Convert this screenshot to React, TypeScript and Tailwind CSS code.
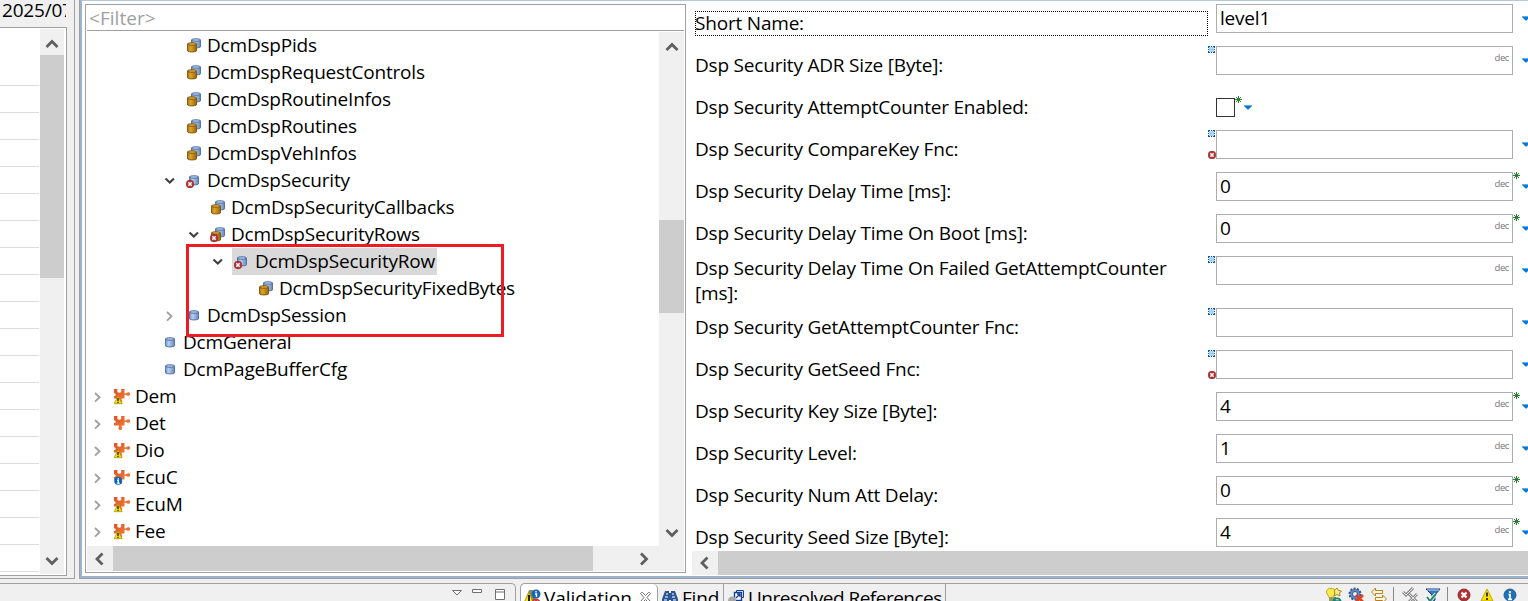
import type { ReactNode } from 'react';

type Kind = 'pair' | 'pairError' | 'single' | 'singleError' | 'warn' | 'plain' | 'info';
type TreeRow = { label: string; level: number; kind: Kind; state?: 'open' | 'closed'; selected?: boolean };

const tree: TreeRow[] = [
  { label: 'DcmDspPids', level: 4, kind: 'pair' },
  { label: 'DcmDspRequestControls', level: 4, kind: 'pair' },
  { label: 'DcmDspRoutineInfos', level: 4, kind: 'pair' },
  { label: 'DcmDspRoutines', level: 4, kind: 'pair' },
  { label: 'DcmDspVehInfos', level: 4, kind: 'pair' },
  { label: 'DcmDspSecurity', level: 4, kind: 'singleError', state: 'open' },
  { label: 'DcmDspSecurityCallbacks', level: 5, kind: 'pair' },
  { label: 'DcmDspSecurityRows', level: 5, kind: 'pairError', state: 'open' },
  { label: 'DcmDspSecurityRow', level: 6, kind: 'singleError', state: 'open', selected: true },
  { label: 'DcmDspSecurityFixedBytes', level: 7, kind: 'pair' },
  { label: 'DcmDspSession', level: 4, kind: 'single', state: 'closed' },
  { label: 'DcmGeneral', level: 3, kind: 'single' },
  { label: 'DcmPageBufferCfg', level: 3, kind: 'single' },
  { label: 'Dem', level: 1, kind: 'warn', state: 'closed' },
  { label: 'Det', level: 1, kind: 'plain', state: 'closed' },
  { label: 'Dio', level: 1, kind: 'warn', state: 'closed' },
  { label: 'EcuC', level: 1, kind: 'info', state: 'closed' },
  { label: 'EcuM', level: 1, kind: 'warn', state: 'closed' },
  { label: 'Fee', level: 1, kind: 'warn', state: 'closed' },
];

const indent: Record<number, string> = { 1: 'w-0', 3: 'w-12', 4: 'w-[72px]', 5: 'w-24', 6: 'w-[120px]', 7: 'w-36' };

type Field = { label: string; value?: string; dec?: boolean; optional?: boolean; error?: boolean; star?: boolean; check?: boolean; tall?: boolean; focus?: boolean };

const fields: Field[] = [
  { label: 'Short Name:', value: 'level1', focus: true },
  { label: 'Dsp Security ADR Size [Byte]:', dec: true, optional: true },
  { label: 'Dsp Security AttemptCounter Enabled:', check: true },
  { label: 'Dsp Security CompareKey Fnc:', optional: true, error: true },
  { label: 'Dsp Security Delay Time [ms]:', value: '0', dec: true, star: true },
  { label: 'Dsp Security Delay Time On Boot [ms]:', value: '0', dec: true, star: true },
  { label: 'Dsp Security Delay Time On Failed GetAttemptCounter [ms]:', dec: true, optional: true, tall: true },
  { label: 'Dsp Security GetAttemptCounter Fnc:', optional: true },
  { label: 'Dsp Security GetSeed Fnc:', optional: true, error: true },
  { label: 'Dsp Security Key Size [Byte]:', value: '4', dec: true, star: true },
  { label: 'Dsp Security Level:', value: '1', dec: true },
  { label: 'Dsp Security Num Att Delay:', value: '0', dec: true, star: true },
  { label: 'Dsp Security Seed Size [Byte]:', value: '4', dec: true, star: true },
];

function Defs() {
  return (
    <svg width="0" height="0" className="absolute">
      <defs>
        <linearGradient id="blue" x1="0" x2="1">
          <stop offset="0" stopColor="#6d93cc" />
          <stop offset=".35" stopColor="#b9d0ee" />
          <stop offset="1" stopColor="#6488c0" />
        </linearGradient>
        <linearGradient id="gold" x1="0" x2="1">
          <stop offset="0" stopColor="#b07a0c" />
          <stop offset=".35" stopColor="#dca32a" />
          <stop offset="1" stopColor="#9a6600" />
        </linearGradient>
        <linearGradient id="orange" x1="0" x2="1" y2="1">
          <stop offset="0" stopColor="#e2512a" />
          <stop offset="1" stopColor="#f28a35" />
        </linearGradient>
        <radialGradient id="red">
          <stop offset="0" stopColor="#d8403c" />
          <stop offset="1" stopColor="#a82a2c" />
        </radialGradient>
      </defs>
    </svg>
  );
}

function Cylinder({ x, y, tone }: { x: number; y: number; tone: 'blue' | 'gold' }) {
  const line = tone === 'blue' ? '#4f6b9d' : '#7a5210';
  const top = tone === 'blue' ? '#a9c6ea' : '#d9a840';
  return (
    <g transform={`translate(${x} ${y})`}>
      <path d="M.5 2v6.900C1.600 10.300 8.400 10.300 9.500 8.900V2z" fill={`url(#${tone})`} stroke={line} strokeWidth=".9" />
      <path d="M.5 2C.5 .3 9.500 .3 9.500 2S.5 3.700 .5 2z" fill={top} stroke={line} strokeWidth=".9" />
    </g>
  );
}

function ErrorMark({ x, y }: { x: number; y: number }) {
  return (
    <g transform={`translate(${x} ${y})`}>
      <circle cx="4" cy="4" r="3.900" fill="url(#red)" stroke="#8f3437" strokeWidth=".5" />
      <path d="M2.300 2.300l3.400 3.400M5.700 2.300L2.300 5.700" stroke="#fff" strokeWidth="1.400" />
    </g>
  );
}

function NodeIcon({ kind }: { kind: Kind }) {
  if (kind === 'warn' || kind === 'plain' || kind === 'info') {
    return (
      <svg width="18" height="17" viewBox="1 0.5 18 17" className="shrink-0">
        <path
          d="M1 1.500h3.200c.8 0-.3 1.800.3 2.900.6 1 3 1 3.600 0 .6-1.100-.5-2.900.3-2.900H11.500v4.300c.9.400 1.700.1 2.300-.5 1.300-1.200 3.400-.5 3.400 1.200s-2.100 2.400-3.400 1.300c-.6-.6-1.500-.8-2.300-.3v3.400H9c-1 .3-.5.900-.1 1.500.8 1.300.1 3.200-1.600 3.200s-2.400-1.900-1.600-3.200c.4-.6.7-1.200-.2-1.500H1V8.500c2.200.6 2.200-3.400 0-2.800z"
          fill="url(#orange)"
        />
        {kind === 'warn' && (
          <g>
            <path d="M5 8.300L1.200 16.200h8z" fill="#ffe100" stroke="#a89400" strokeWidth=".8" />
            <path d="M5 10.500v3M5 14.200v1.300" stroke="#222" strokeWidth="1.400" />
          </g>
        )}
        {kind === 'info' && (
          <g>
            <circle cx="5.200" cy="12.300" r="4" fill="#0a63c0" />
            <path d="M5.300 9.600v1.400M4 11.900h1.300v2.600M3.800 14.700h3" stroke="#fff" strokeWidth="1.200" fill="none" />
          </g>
        )}
      </svg>
    );
  }
  const pair = kind === 'pair' || kind === 'pairError';
  const bad = kind === 'pairError' || kind === 'singleError';
  return (
    <svg width="18" height="17" viewBox="0 0 18 17" className="shrink-0">
      {pair && <Cylinder x={5} y={1} tone="blue" />}
      {pair && <Cylinder x={1} y={5} tone="gold" />}
      {!pair && <Cylinder x={3} y={3} tone="blue" />}
      {bad && <ErrorMark x={0} y={8} />}
    </svg>
  );
}

function Arrow({ dir }: { dir: 'up' | 'down' | 'left' | 'right' }) {
  const d = {
    up: 'M2.500 11l5.500-5.500 5.500 5.500',
    down: 'M2.500 5l5.500 5.500 5.500-5.500',
    left: 'M10.500 2.500L5 8l5.500 5.500',
    right: 'M5 2.500L10.500 8 5 13.500',
  }[dir];
  return (
    <svg width="16" height="16" viewBox="0 0 16 16" className="shrink-0">
      <path d={d} fill="none" stroke="#5f5f5f" strokeWidth="2.800" />
    </svg>
  );
}

function Twisty({ state }: { state?: 'open' | 'closed' }) {
  return (
    <span className="flex w-[25px] shrink-0 items-center pl-1">
      {state && (
        <svg width="14" height="14" viewBox="0 0 14 14">
          {state === 'open' ? (
            <path d="M2.500 4.500L6.800 8.500 11 4.500" fill="none" stroke="#404040" strokeWidth="2.100" />
          ) : (
            <path d="M4 3l4.500 4.300L4 11.600" fill="none" stroke="#a2a2a2" strokeWidth="1.900" />
          )}
        </svg>
      )}
    </span>
  );
}

function Drop() {
  return (
    <svg width="8" height="5" viewBox="0 0 8 5" className="shrink-0">
      <path d="M0 0h8v1L4.500 4.500h-1L0 1z" fill="#0878d4" />
      <path d="M0 0h8v1H0z" fill="#5db0ec" />
    </svg>
  );
}

function Star() {
  return (
    <svg width="7" height="7" viewBox="0 0 7 7" className="shrink-0">
      <path d="M3.500 0v7M0 3.500h7M1 1l5 5M6 1L1 6" stroke="#1c7a22" strokeWidth=".95" />
    </svg>
  );
}

function FieldRow({ f }: { f: Field }) {
  return (
    <div className={f.tall ? 'flex h-[52px] shrink-0' : 'flex h-[42px] shrink-0'}>
      <div className="w-[513px] shrink-0">
        {f.tall ? (
          <div className="w-[490px] leading-[25px]">{f.label}</div>
        ) : (
          <div className={f.focus ? 'mt-[7px] h-[25px] leading-[25px] outline-1 -outline-offset-1 outline-dotted outline-black' : 'mt-[7px] h-[25px] leading-[25px]'}>
            {f.label}
          </div>
        )}
      </div>
      <div className="flex h-[29px] w-2 shrink-0 flex-col justify-between">
        {f.optional && (
          <svg width="7" height="7" viewBox="0 0 7 7" shapeRendering="crispEdges">
            <rect x="1" y="1" width="5" height="5" fill="#a9d2fb" />
            <path d="M0 0h2v1H0zM3 0h1v1H3zM5 0h2v1H5zM0 6h2v1H0zM3 6h1v1H3zM5 6h2v1H5zM0 1h1v1H0zM0 3h1v1H0zM0 5h1v1H0zM6 1h1v1H6zM6 3h1v1H6zM6 5h1v1H6z" fill="#0b55a5" />
          </svg>
        )}
        {f.error && (
          <svg width="8" height="8" viewBox="0 0 8 8">
            <ErrorMark x={0} y={0} />
          </svg>
        )}
      </div>
      {f.check ? (
        <div className="flex pt-[10px]">
          <span className="size-[19px] border border-[#333]" />
          <span className="-mt-[2px] w-[9px]">
            <Star />
          </span>
          <span className="mt-[7px]">
            <Drop />
          </span>
        </div>
      ) : (
        <div className="flex">
          <div className="flex h-[29px] w-[297px] shrink-0 items-center justify-between border border-[#abadb3] bg-white pr-[3px] pl-[3px]">
            <span className="leading-[27px]">{f.value}</span>
            {f.dec && <span className="pb-[5px] text-[9.5px] leading-none tracking-[-0.4px] text-[#777]">dec</span>}
          </div>
          <span className="w-[9px] shrink-0 pt-0">{f.star && <Star />}</span>
          <span className="pt-3">
            <Drop />
          </span>
        </div>
      )}
    </div>
  );
}

function LogPanel() {
  return (
    <div className="flex h-[579px] w-[75px] shrink-0 flex-col border-r border-b border-[#a0a0a0] bg-[#f0f0f0]">
      <div className="h-[27px] w-[66px] shrink-0 overflow-hidden pl-[2px] text-[19px] leading-[21px] whitespace-nowrap">2025/07</div>
      <div className="flex h-[549px] w-[67px] border-t border-r border-b border-[#a0a0a0] bg-white pt-px">
        <div className="flex w-10 flex-col overflow-hidden pr-px">
          <div className="h-[57px] shrink-0 border-b border-[#dcdcdc]" />
          {Array.from({ length: 18 }, (_, i) => (
            <div key={i} className="h-[27px] shrink-0 border-b border-[#dcdcdc]" />
          ))}
        </div>
        <div className="mb-px flex w-6 flex-col items-center justify-between bg-[#f0f0f0]">
          <div className="flex h-[26px] items-center pt-[3px]"><Arrow dir="up" /></div>
          <div className="h-[223px] w-6 bg-[#cdcdcd]" />
          <div className="grow" />
          <div className="flex h-[26px] items-center"><Arrow dir="down" /></div>
        </div>
      </div>
    </div>
  );
}

function TreePanel() {
  return (
    <div className="relative mt-1 flex h-[569px] w-[601px] shrink-0 flex-col border border-[#a0a0a0] bg-white px-px">
      <div className="h-[26px] shrink-0 border-b border-[#a0a0a0] pl-[2px] text-[19px] leading-[27px] tracking-[0.05px] text-[#a0a0a0]">&lt;Filter&gt;</div>
      <div className="flex h-[515px] shrink-0 pt-px">
        <div className="w-[572px] shrink-0">
          {tree.map((n) => (
            <div key={n.label} className="flex h-[27px] items-center">
              <span className={`${indent[n.level]} shrink-0`} />
              <Twisty state={n.state} />
              <span className={n.selected ? 'flex h-[27px] items-center bg-[#d9d9d9] pr-[2px]' : 'flex h-[27px] items-center'}>
                <span className="-mr-px flex w-6 pl-[2px]"><NodeIcon kind={n.kind} /></span>
                <span className="leading-[27px] whitespace-nowrap">{n.label}</span>
              </span>
            </div>
          ))}
        </div>
        <div className="flex grow flex-col items-center bg-[#f0f0f0]">
          <div className="flex h-[26px] items-center pt-[3px]"><Arrow dir="up" /></div>
          <div className="h-[162px]" />
          <div className="h-[93px] w-full bg-[#cdcdcd]" />
          <div className="grow" />
          <div className="flex h-[26px] items-center"><Arrow dir="down" /></div>
        </div>
      </div>
      <div className="flex h-[25px] items-center bg-[#f0f0f0]">
        <div className="flex w-[26px] shrink-0 justify-center"><Arrow dir="left" /></div>
        <div className="h-full w-[480px] shrink-0 bg-[#cdcdcd]" />
        <div className="flex grow pl-[43px]"><Arrow dir="right" /></div>
      </div>
      <div className="absolute top-[239px] left-[100px] h-[93px] w-[318px] border-[3px] border-[#ed1c24]" />
    </div>
  );
}

function Tool({ children }: { children: ReactNode }) {
  return <svg width="16" height="16" viewBox="0 0 16 16" className="shrink-0">{children}</svg>;
}

function BottomBar() {
  return (
    <div className="flex h-[18px] overflow-hidden">
      <div className="flex h-10 w-[516px] shrink-0 justify-end rounded-tr-[5px] border-t border-r border-[#a0a0a0] pr-[9px]">
        <svg width="56" height="16" viewBox="0 0 56 16" fill="#fff" stroke="#707070">
          <path d="M2.500 6.500h9L7 11z" />
          <path d="M22.500 5.500h9v3h-9z" />
          <path d="M45.500 5.500h9v10h-9zM45.500 8h9" />
        </svg>
      </div>
      <div className="ml-1 flex h-10 grow rounded-tl-[5px] border-t border-l border-[#a0a0a0] text-[19px] leading-[29px] tracking-[-0.2px]">
        <div className="flex w-[137px] shrink-0 rounded-t-[5px] border-r border-[#a0a0a0] bg-white pt-0 pl-[3px]">
          <svg width="18" height="20" viewBox="0 0 18 20" className="mt-[5px] mr-[2px] shrink-0">
            <path d="M5 1h4l4 14H0z" fill="#8a8a6a" />
            <path d="M5 3L-1 16h11z" fill="#ffe21a" stroke="#b19a00" />
            <path d="M5 6v6" stroke="#222" strokeWidth="2" />
            <circle cx="12" cy="5" r="4.500" fill="#1766b5" />
            <path d="M12 2v1.500M11 5h1.500v3" stroke="#fff" strokeWidth="1.400" fill="none" />
            <circle cx="12" cy="14" r="4.500" fill="#c5383d" />
            <path d="M10 12l4 4M14 12l-4 4" stroke="#fff" strokeWidth="1.400" />
          </svg>
          <span className="w-[96px] shrink-0 tracking-[-0.05px]">Validation</span>
          <svg width="11" height="11" viewBox="0 0 11 11" className="mt-2 shrink-0" fill="#fff" stroke="#6b6b6b">
            <path d="M.5 1.500l1-1h1l3 3 3-3h1l1 1-3.500 4 3.500 4-1 1h-1l-3-3-3 3h-1l-1-1 3.500-4z" />
          </svg>
        </div>
        <div className="flex w-[66px] shrink-0 border-r border-[#a0a0a0] pl-1">
          <svg width="17" height="18" viewBox="0 0 17 18" className="mt-[6px] mr-[3px] shrink-0">
            <path d="M3 1h4v2h2V1h4l3 8v6H9v-5H7v5H0V9z" fill="#2c5592" />
            <path d="M2 10h3M11 10h3M4 4h2M10 4h2M3 7h3M10 7h3" stroke="#b5cdec" strokeWidth="1.500" />
          </svg>
          <span>Find</span>
        </div>
        <div className="flex w-[222px] shrink-0 border-r border-[#a0a0a0] pl-1">
          <svg width="17" height="18" viewBox="0 0 17 18" className="mt-[5px] mr-[3px] shrink-0">
            <path d="M8.500 1.500h7v7h-7z" fill="#eef5ff" stroke="#123f93" />
            <path d="M6.500 3.500h7v8h-7z" fill="#fff" stroke="#123f93" strokeWidth="1.400" />
            <path d="M8 9l4-4M9 5h3v3" stroke="#123f93" strokeWidth="1.300" fill="none" />
            <path d="M0 12c0-5 6-6 8-2v6H0z" fill="#a7a7a7" />
          </svg>
          <span className="tracking-[-0.5px] whitespace-nowrap">Unresolved References</span>
        </div>
        <div className="mr-[10px] flex grow items-start justify-end pt-[3px]">
          <Tool>
            <path d="M.5 5c0-5 9-5 9 0 0 2.500-2.500 3.500-2.500 5.500H3C3 8.500.5 7.500.5 5z" fill="#ffe84c" stroke="#c4a32b" />
            <path d="M11 1l1.500 2.500 3 .5-2 2 .5 3-3-1.500L8 9l1-3-1-2z" fill="#ffe97d" stroke="#a68b1e" />
            <path d="M3 10h5v5H3z" fill="#999966" />
            <path d="M7 16c0-6 7-6 8-1M9 10v4h5" fill="none" stroke="#227e70" strokeWidth="1.600" />
          </Tool>
          <span className="w-[6px]" />
          <Tool>
            <circle cx="7" cy="7" r="5.500" fill="#6889be" stroke="#365990" strokeWidth="2" strokeDasharray="2 1.400" />
            <circle cx="7" cy="7" r="2.500" fill="#eef4fc" stroke="#365990" />
            <path d="M8 8l7 7M15 8l-7 7" stroke="#df4221" strokeWidth="2.800" />
          </Tool>
          <span className="w-[7px]" />
          <Tool>
            <path d="M.5 5l4-4v2.500h7v3h-7V9zM15.500 12l-4-4v2.500h-7v3h7V16z" fill="#fff7df" stroke="#b98015" />
          </Tool>
          <span className="mr-2 ml-[6px] h-[18px] w-px bg-[#888]" />
          <Tool>
            <path d="M1 5l3 3 7-7M7 7l8 8M15 7l-8 8" fill="none" stroke="#8c8c8c" strokeWidth="3" />
            <path d="M1 5l3 3 7-7M7 7l8 8M15 7l-8 8" fill="none" stroke="#e2e2e2" />
          </Tool>
          <span className="w-[7px]" />
          <Tool>
            <path d="M1 2h14L10 8v5l-3 2V8z" fill="#3d78c0" stroke="#183f82" />
            <path d="M2 3h12" stroke="#b9dafa" />
            <path d="M2 10l3 4 6-7" fill="none" stroke="#fff" strokeWidth="3.500" />
            <path d="M2 10l3 4 6-7" fill="none" stroke="#27856c" strokeWidth="2" />
          </Tool>
          <span className="mr-2 ml-[6px] h-[18px] w-px bg-[#888]" />
          <Tool>
            <circle cx="8" cy="8" r="6" fill="url(#red)" stroke="#8c3035" />
            <path d="M5.500 5.500l5 5M10.500 5.500l-5 5" stroke="#fff" strokeWidth="2.200" />
          </Tool>
          <span className="w-[7px]" />
          <Tool>
            <path d="M8 2l6 12H2z" fill="#ffe100" stroke="#c3a500" strokeLinejoin="round" />
            <path d="M8 5.500v4M8 11v2" stroke="#222" strokeWidth="1.700" />
          </Tool>
          <span className="w-[7px]" />
          <Tool>
            <circle cx="8" cy="8" r="6" fill="#1e70bd" stroke="#285e93" />
            <path d="M8 4v2M6.500 7.700H8V12M6 12.300h4" stroke="#fff" strokeWidth="1.700" fill="none" />
          </Tool>
        </div>
      </div>
    </div>
  );
}

export default function App() {
  return (
    <div className="h-[601px] w-[1528px] overflow-hidden bg-[#f0f0f0] font-['Open_Sans','Noto_Sans',sans-serif] text-[19px] tracking-[-0.2px] text-black">
      <Defs />
      <div className="flex h-[579px]">
        <LogPanel />
        <div className="ml-1 flex h-[579px] grow border-b border-l border-[#a0a0a0]">
          <div className="flex h-[578px] w-full border-t border-b-2 border-l-2 border-t-[#b4c7dc] border-b-[#99b4d1] border-l-[#99b4d1] bg-white pl-[3px]">
            <div className="-mt-px"><TreePanel /></div>
            <div className="flex w-[842px] shrink-0 flex-col overflow-hidden pl-[6px]">
              <div className="flex h-[550px] shrink-0 flex-col overflow-hidden pt-[3px] pl-[3px]">
                {fields.map((f) => (
                  <FieldRow key={f.label} f={f} />
                ))}
              </div>
              <div className="flex h-6 items-center bg-[#cdcdcd]">
                <div className="flex h-full w-[26px] items-center justify-center bg-[#f0f0f0]"><Arrow dir="left" /></div>
              </div>
            </div>
          </div>
        </div>
      </div>
      <div className="h-1" />
      <BottomBar />
    </div>
  );
}
